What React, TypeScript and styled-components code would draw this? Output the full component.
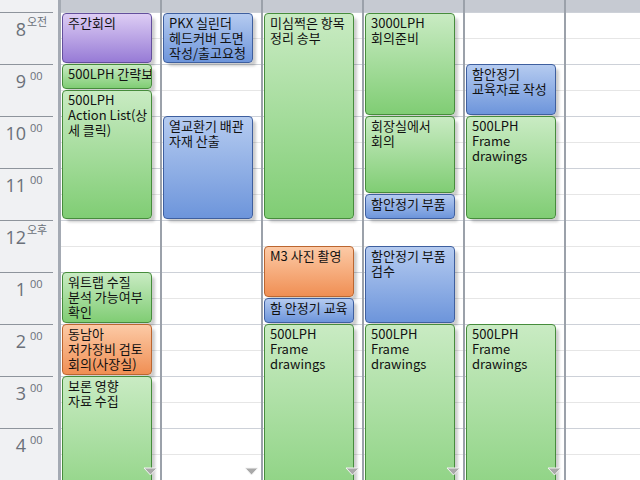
import React from "react";
import styled, { createGlobalStyle } from "styled-components";

const GlobalStyle = createGlobalStyle`
  html, body { margin: 0; padding: 0; background: #ffffff; overflow: hidden; }
  #root { width: 640px; height: 480px; }
`;

type Tone = "green" | "blue" | "purple" | "orange";

const tones: Record<Tone, { top: string; bottom: string; border: string }> = {
  green: { top: "#c9ebc3", bottom: "#80cd74", border: "#468c3c" },
  blue: { top: "#b5cbf0", bottom: "#6d95db", border: "#3e5f9f" },
  purple: { top: "#ddcdf4", bottom: "#977bd6", border: "#634f9c" },
  orange: { top: "#fccaa6", bottom: "#f08f54", border: "#bb6630" },
};

type Appt = { start: number; end: number; tone: Tone; lines: string[] };

// rows: 8:00 -> 1, each half hour +1
const r = (h: number, m = 0) => (h - 8) * 2 + m / 30 + 1;

const days: { appts: Appt[]; more: boolean }[] = [
  {
    more: true,
    appts: [
      { start: r(8), end: r(9), tone: "purple", lines: ["주간회의"] },
      { start: r(9), end: r(9, 30), tone: "green", lines: ["500LPH 간략보고"] },
      { start: r(9, 30), end: r(12), tone: "green", lines: ["500LPH", "Action List(상", "세 클릭)"] },
      { start: r(13), end: r(14), tone: "green", lines: ["워트랩 수질", "분석 가능여부", "확인"] },
      { start: r(14), end: r(15), tone: "orange", lines: ["동남아", "저가장비 검토", "회의(사장실)"] },
      { start: r(15), end: r(18), tone: "green", lines: ["보론 영향", "자료 수집"] },
    ],
  },
  {
    more: true,
    appts: [
      { start: r(8), end: r(9), tone: "blue", lines: ["PKX 실린더", "헤드커버 도면", "작성/출고요청"] },
      { start: r(10), end: r(12), tone: "blue", lines: ["열교환기 배관", "자재 산출"] },
    ],
  },
  {
    more: true,
    appts: [
      { start: r(8), end: r(12), tone: "green", lines: ["미심쩍은 항목", "정리 송부"] },
      { start: r(12, 30), end: r(13, 30), tone: "orange", lines: ["M3 사진 촬영"] },
      { start: r(13, 30), end: r(14), tone: "blue", lines: ["함 안정기 교육"] },
      { start: r(14), end: r(18), tone: "green", lines: ["500LPH", "Frame", "drawings"] },
    ],
  },
  {
    more: true,
    appts: [
      { start: r(8), end: r(10), tone: "green", lines: ["3000LPH", "회의준비"] },
      { start: r(10), end: r(11, 30), tone: "green", lines: ["회장실에서", "회의"] },
      { start: r(11, 30), end: r(12), tone: "blue", lines: ["함안정기 부품"] },
      { start: r(12, 30), end: r(14), tone: "blue", lines: ["함안정기 부품", "검수"] },
      { start: r(14), end: r(18), tone: "green", lines: ["500LPH", "Frame", "drawings"] },
    ],
  },
  {
    more: true,
    appts: [
      { start: r(9), end: r(10), tone: "blue", lines: ["함안정기", "교육자료 작성"] },
      { start: r(10), end: r(12), tone: "green", lines: ["500LPH", "Frame", "drawings"] },
      { start: r(14), end: r(18), tone: "green", lines: ["500LPH", "Frame", "drawings"] },
    ],
  },
  { more: false, appts: [] },
];

const hours: { num: string; sup: string }[] = [
  { num: "8", sup: "오전" },
  { num: "9", sup: "00" },
  { num: "10", sup: "00" },
  { num: "11", sup: "00" },
  { num: "12", sup: "오후" },
  { num: "1", sup: "00" },
  { num: "2", sup: "00" },
  { num: "3", sup: "00" },
  { num: "4", sup: "00" },
];

const Calendar = styled.div`
  display: flex;
  width: 640px;
  height: 480px;
  overflow: hidden;
  background: #ffffff;
`;

const TimeColumn = styled.div`
  flex: none;
  width: 58px;
  padding-top: 12px;
  background: #f0f1f3;
  border-right: 3px solid #a4aab3;
  display: flex;
  flex-direction: column;
`;

const HourSlot = styled.div`
  box-sizing: border-box;
  width: 53px;
  height: 52px;
  border-top: 1px solid #8e949c;
  display: grid;
  grid-template-columns: 26px 27px;
  column-gap: 4px;
  align-items: start;
`;

const HourNum = styled.span`
  justify-self: end;
  margin-top: 7px;
  font-family: "Open Sans", "Noto Sans", sans-serif;
  font-size: 18px;
  line-height: 18px;
  color: #6a7079;
`;

const HourSup = styled.span<{ $kor: boolean }>`
  margin-top: ${(p) => (p.$kor ? "3px" : "5px")};
  margin-left: ${(p) => (p.$kor ? "-3px" : "0")};
  font-family: "Open Sans", "Noto Sans CJK KR", sans-serif;
  font-size: 11px;
  line-height: 11px;
  color: #6a7079;
  white-space: nowrap;
`;

const DayColumn = styled.div<{ $last: boolean }>`
  position: relative;
  flex: ${(p) => (p.$last ? "1 1 auto" : "none")};
  width: ${(p) => (p.$last ? "auto" : "99px")};
  border-right: ${(p) => (p.$last ? "none" : "2px solid #9ba1aa")};
  display: flex;
  flex-direction: column;
`;

const DayHeader = styled.div`
  height: 12px;
  flex: none;
  background: #c6cad2;
`;

const DayBody = styled.div`
  flex: 1;
  overflow: hidden;
  display: grid;
  grid-template-columns: 90px;
  grid-template-rows: repeat(20, 26px);
  padding-left: 1px;
  background-image: repeating-linear-gradient(
    to bottom,
    #cdd1d8 0px,
    #cdd1d8 1px,
    transparent 1px,
    transparent 26px,
    #e6e6e6 26px,
    #e6e6e6 27px,
    transparent 27px,
    transparent 52px
  );
`;

const Appointment = styled.div<{ $tone: Tone; $first: boolean }>`
  box-sizing: border-box;
  margin-top: ${(p) => (p.$first ? "1px" : "0")};
  margin-bottom: 1px;
  min-height: 0;
  overflow: hidden;
  border: 1px solid ${(p) => tones[p.$tone].border};
  border-radius: 4px;
  background: linear-gradient(
    to bottom,
    ${(p) => tones[p.$tone].top},
    ${(p) => tones[p.$tone].bottom}
  );
  box-shadow: 4px 4px 3px -1px rgba(0, 0, 0, 0.2);
  padding: 1px 2px 0 5px;
  font-family: "Noto Sans CJK KR", "Noto Sans", sans-serif;
  font-size: 13px;
  line-height: 15px;
  color: #111111;
`;

const Line = styled.span`
  display: block;
  white-space: nowrap;
`;

const MoreArrow = styled.svg`
  position: absolute;
  right: 2px;
  bottom: 4px;
`;

export default function App() {
  return (
    <>
      <GlobalStyle />
      <Calendar>
        <TimeColumn>
          {hours.map((h) => (
            <HourSlot key={h.num}>
              <HourNum>{h.num}</HourNum>
              <HourSup $kor={h.sup !== "00"}>{h.sup}</HourSup>
            </HourSlot>
          ))}
        </TimeColumn>
        {days.map((d, i) => (
          <DayColumn key={i} $last={i === days.length - 1}>
            <DayHeader />
            <DayBody>
              {d.appts.map((a, j) => (
                <Appointment
                  key={j}
                  $tone={a.tone}
                  $first={a.start === 1}
                  style={{ gridRow: `${a.start} / ${a.end}`, gridColumn: 1 }}
                >
                  {a.lines.map((l, k) => (
                    <Line key={k}>{l}</Line>
                  ))}
                </Appointment>
              ))}
            </DayBody>
            {d.more && (
              <MoreArrow width="15" height="9" viewBox="0 0 15 9">
                <polygon points="1,1 14,1 7.5,8" fill="#a9a9a9" stroke="#f4f4f4" strokeWidth="1" />
              </MoreArrow>
            )}
          </DayColumn>
        ))}
      </Calendar>
    </>
  );
}
